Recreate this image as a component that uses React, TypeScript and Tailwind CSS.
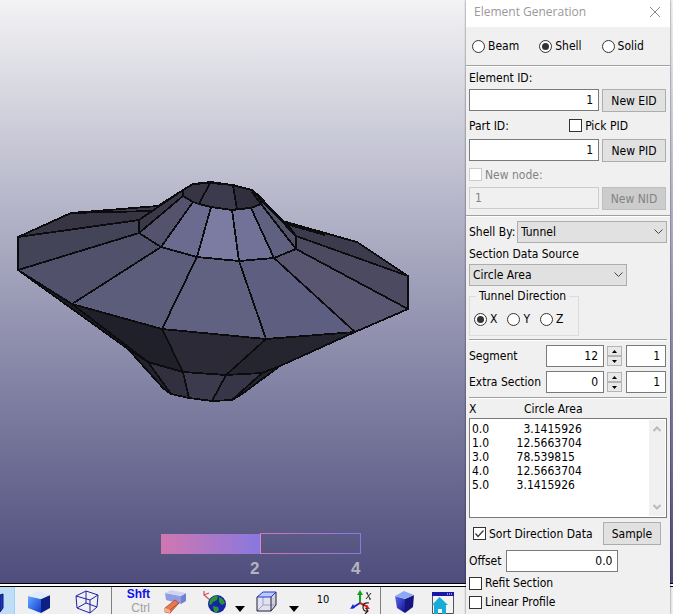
import React from "react";

const faces: [string, string][] = [
  // back of the upper wing
  ["71,213 158,206 183,190 139,220", "#3a3847"],
  ["286,222 357,242 408,276 296,236", "#3c3b4d"],
  // left wing
  ["18,237 71,213 152,211 139,220", "#373544"],
  ["18,237 139,220 139,233 18,270", "#444459"],
  ["18,270 139,233 161,247 72,304", "#52516b"],
  ["72,304 161,247 197,257 162,329", "#5c5d7a"],
  ["162,329 197,257 239,261 266,339", "#616182"],
  ["266,339 239,261 274,258 355,332", "#5e5f80"],
  ["355,332 274,258 296,249 408,309", "#585670"],
  ["408,309 296,249 296,236 408,276", "#4b4a60"],
  // cone
  ["139,220 183,190 183,196 139,233", "#3b3948"],
  ["139,233 183,196 193,202 161,247", "#54526c"],
  ["161,247 193,202 211,207 197,257", "#6b6b90"],
  ["197,257 211,207 232,210 239,261", "#7c7ba1"],
  ["239,261 232,210 251,208 274,258", "#727299"],
  ["274,258 251,208 261,204 296,249", "#606080"],
  ["296,249 261,204 261,199 296,236", "#52516b"],
  ["252,190 258,195 284,222 296,236 261,200", "#42415a"],
  // inside of the top opening
  ["183,196 183,190 193,184 210,183 199,204 193,202", "#373544"],
  ["199,204 210,183 233,185 237,209 232,210 211,207", "#3b3b4d"],
  ["237,209 233,185 252,190 261,200 261,204 251,208", "#312f3d"],
  // lower side
  ["18,270 72,304 148,362 128,349", "#1c1c24"],
  ["72,304 162,329 183,372 148,362", "#20202a"],
  ["162,329 266,339 226,375 183,372", "#2b2a36"],
  ["266,339 355,332 280,366 262,373 226,375", "#252530"],
  ["128,349 148,362 171,394 163,388", "#23232e"],
  ["148,362 183,372 189,398 171,394", "#32303f"],
  ["183,372 226,375 212,401 189,398", "#3b3b4d"],
  ["226,375 262,373 232,400 212,401", "#373548"],
  ["262,373 280,366 242,394 232,400", "#23232e"],
];

const edges: string[] = [
  "71,213 158,206 183,190",
  "71,213 152,211",
  "284,222 357,242 408,276",
  "286,224 325,235",
  "183,190 193,184 211,182 232,185 252,190 261,200",
  "252,192 261,204",
  "128,349 163,388 171,394",
  "262,373 280,366 242,394",
  "18,270 128,349 148,362",
];

function Mesh() {
  return (
    <g shapeRendering="crispEdges" stroke="#0c0c0e" strokeWidth="1.8" strokeLinejoin="round">
      {faces.map(([points, fill]) => (
        <polygon key={points} points={points} fill={fill} />
      ))}
      {edges.map((points) => (
        <polyline key={points} points={points} fill="none" />
      ))}
    </g>
  );
}

function Viewport() {
  return (
    <main className="min-h-0 flex-1 bg-linear-to-b from-[#f3f3f4] to-[#4f4d7c]">
      <svg viewBox="0 0 673 583" preserveAspectRatio="xMinYMin meet" className="block h-full w-full" role="img" aria-label="Shell mesh">
        <defs>
          <linearGradient id="bar" gradientUnits="objectBoundingBox">
            <stop offset="0" stopColor="#d077b0" />
            <stop offset="1" stopColor="#8878e0" />
          </linearGradient>
        </defs>
        <Mesh />
        <rect x="161" y="534" width="100" height="20" fill="url(#bar)" />
        <rect x="260.500" y="533.500" width="100" height="20" fill="none" stroke="url(#bar)" />
        <path d="M260.500 534v20" stroke="#e87fc4" />
        <g fill="#b4b4be" fontFamily="Liberation Sans, sans-serif" fontSize="17" fontWeight="bold">
          <text x="250" y="574">2</text>
          <text x="351" y="574">4</text>
        </g>
      </svg>
    </main>
  );
}

function SolidCube({ dark = false }: { dark?: boolean }) {
  const id = dark ? "cubeDark" : "cubeLight";
  return (
    <svg width="24" height="24" viewBox="0 0 24 24" className="shrink-0">
      <defs>
        <linearGradient id={id} x1="0" y1="0" x2="1" y2="1">
          <stop offset="0" stopColor={dark ? "#5a6cf0" : "#6aa8ff"} />
          <stop offset="1" stopColor={dark ? "#10108a" : "#0a3cd0"} />
        </linearGradient>
      </defs>
      {dark ? (
        <>
          <path d="M2 6 12 9v14L4 18z" fill={`url(#${id})`} />
          <path d="M12 9 21 5 20 17 12 23z" fill="#15157e" />
          <path d="M2 6 11 1 21 5 12 9z" fill="#8fa8f4" />
        </>
      ) : (
        <>
          <path d="M1 6 14 9v14L1 18z" fill={`url(#${id})`} />
          <path d="M14 9 23 5v13l-9 5z" fill="#0e2084" />
          <path d="M1 6 11 1l12 4-9 4z" fill="#dfeafa" />
        </>
      )}
    </svg>
  );
}

function WireCube() {
  return (
    <svg width="26" height="24" viewBox="0 0 26 24" fill="none" stroke="#2020a8" className="shrink-0">
      <path d="M2 6 12 1l12 4-8 5zM2 6l1 12 13 5V10M24 5l-1 12-7 6M12 1v12L3 18M12 13l11 4" />
    </svg>
  );
}

function EraserIcon() {
  return (
    <svg width="24" height="24" viewBox="0 0 24 24" className="shrink-0">
      <path d="M1 3 17 6v8L2 10z" fill="#929ce0" />
      <path d="M17 6l5-3v8l-5 3z" fill="#7480cc" />
      <path d="M1 3 7 0l15 3-5 3z" fill="#d0d4f4" />
      <path d="M1 18 11 10l4 3-9 10-5-1z" fill="#e87850" stroke="#a84830" strokeWidth=".8" />
      <path d="M1 18l5 2v3l-5-1z" fill="#f8b090" />
      <path d="M6 20l9-7" stroke="#a84830" strokeWidth=".8" />
    </svg>
  );
}

function GlobeIcon() {
  return (
    <svg width="26" height="24" viewBox="0 0 26 24" className="shrink-0">
      <path d="M2 1v4l6 5M2 5l5-2" fill="none" stroke="#d05050" strokeWidth="1.200" />
      <circle cx="15" cy="14" r="9" fill="#1824a8" />
      <path d="M8 10q4-5 8-4l-1 4-4 2-2 3-2-1zM17 7q4 1 6 6l-3 2-3-3zM11 16l5 1 1 3-3 3q-3-2-3-7z" fill="#28962e" />
    </svg>
  );
}

function BoxIcon() {
  return (
    <svg width="22" height="24" viewBox="0 0 22 24" className="shrink-0">
      <path d="M1 7h14v14H1z" fill="#e0e2f4" />
      <path d="M15 7l5-5v13l-5 6z" fill="#d0d0dc" />
      <path d="M1 7 7 2h13l-5 5z" fill="#bccbff" />
      <path d="M7 7v8l-6 6M7 15h13" fill="none" stroke="#a0a0b8" />
      <path d="M1 7v14h14l5-6V2M15 7v14" fill="none" stroke="#202038" />
      <path d="M1 7h14l5-5H7z" fill="none" stroke="#2838c8" />
    </svg>
  );
}

function AxisIcon() {
  return (
    <svg width="24" height="26" viewBox="0 0 24 26" className="shrink-0" fill="none">
      <path d="M11 13V3" stroke="#10a020" strokeWidth="2" />
      <path d="M8 5l3-5 3 5z" fill="#10a020" />
      <path d="M11 13l-8 5" stroke="#1828d8" strokeWidth="2" />
      <path d="M1 19l3-5 2 4z" fill="#1828d8" />
      <path d="M11 13l8 4" stroke="#e02020" strokeWidth="2" />
      <path d="M21 19l-5 0 2-4z" fill="#e02020" />
      <path d="M17 9l5-6M18 3l3 6M17 3h2M20 9h2" stroke="#202020" />
      <path d="M20 13q-6-1-6 4t5 4M17 18l2 3-3 3" stroke="#202020" strokeWidth="1.200" />
    </svg>
  );
}

function HomeIcon() {
  return (
    <svg width="24" height="24" viewBox="0 0 24 24" className="shrink-0">
      <path d="M1.500 2.500h21v21h-21z" fill="#f4f4f0" stroke="#505068" />
      <path d="M1 2h22v4H1z" fill="#1818a8" />
      <path d="M16 4h1M18 4h1M20 4h1" stroke="#fff" />
      <path d="M1 15 8.500 7 17 15h-2v9h-4v-5H7v5H3v-9z" fill="#18acd8" />
    </svg>
  );
}

function ToolButton({ label, className, children }: { label: string; className: string; children: React.ReactNode }) {
  return (
    <button aria-label={label} className={`flex shrink-0 justify-center ${className}`}>
      {children}
    </button>
  );
}

function MenuArrow({ label }: { label: string }) {
  return (
    <button aria-label={label} className="flex w-5 shrink-0 justify-center pt-[19px]">
      <svg width="10" height="6" viewBox="0 0 10 6">
        <path d="M0 0h10L5 6z" fill="#000" />
      </svg>
    </button>
  );
}

function Toolbar() {
  return (
    <footer className="shrink-0 border-t border-black bg-white pt-[2px]">
      <div className="flex h-[28px] items-start overflow-hidden border-t border-black bg-[#f0f0f0]">
        <button aria-label="Shaded view" className="h-full w-[15px] shrink-0 overflow-hidden border-r border-[#99d1ff] bg-[#bfddf5] pt-[5px]">
          <svg width="4" height="20" viewBox="0 0 4 20">
            <path d="M0 2 3 1v14l-3 4z" fill="#1838c8" stroke="#101868" />
          </svg>
        </button>
        <ToolButton label="Solid view" className="w-12 pt-[3px]"><SolidCube /></ToolButton>
        <ToolButton label="Wireframe view" className="w-12 pt-[3px]"><WireCube /></ToolButton>
        <div className="h-full w-px shrink-0 bg-[#808080]" />
        <div className="flex w-[38px] shrink-0 flex-col items-end text-[12px] leading-[14px] font-['Liberation_Sans',sans-serif]">
          <button className="font-bold text-[#1010f0]">Shft</button>
          <button className="text-[#a0a0a0]">Ctrl</button>
        </div>
        <ToolButton label="Erase" className="w-[52px] pt-[3px]"><EraserIcon /></ToolButton>
        <ToolButton label="Globe" className="w-[25px] pt-[3px]"><GlobeIcon /></ToolButton>
        <div className="w-[3px] shrink-0" />
        <MenuArrow label="Globe options" />
        <ToolButton label="Box view" className="w-[34px] pt-[3px]"><BoxIcon /></ToolButton>
        <MenuArrow label="Box options" />
        <div className="flex w-[38px] shrink-0 justify-center pt-[5px] text-[11px] leading-[16px]">10</div>
        <ToolButton label="Rotate about X" className="w-[38px] pt-[3px]"><AxisIcon /></ToolButton>
        <div className="h-full w-px shrink-0 bg-[#808080]" />
        <ToolButton label="Block" className="w-[48px] pt-[3px]"><SolidCube dark /></ToolButton>
        <ToolButton label="Home" className="w-[28px] pt-[3px]"><HomeIcon /></ToolButton>
      </div>
    </footer>
  );
}

function Radio({ name, label, checked }: { name: string; label: string; checked?: boolean }) {
  return (
    <label className="flex items-center gap-[3px]">
      <input
        type="radio"
        name={name}
        defaultChecked={checked}
        className="grid size-[13px] shrink-0 appearance-none place-items-center rounded-full border border-[#333] bg-white before:size-[7px] before:rounded-full checked:before:bg-[#333]"
      />
      {label}
    </label>
  );
}

function Check({ label, checked, disabled }: { label: string; checked?: boolean; disabled?: boolean }) {
  return (
    <label className={`flex items-center gap-[3px] ${disabled ? "text-[#838383]" : ""}`}>
      <span className="grid size-[13px] shrink-0">
        <input
          type="checkbox"
          defaultChecked={checked}
          disabled={disabled}
          className="peer col-start-1 row-start-1 size-[13px] appearance-none border border-[#333] bg-white disabled:border-[#ccc]"
        />
        <svg viewBox="0 0 13 13" className="pointer-events-none invisible col-start-1 row-start-1 size-[13px] peer-checked:visible">
          <path d="M2.500 6.500 5 9.500 10.500 3.500" fill="none" stroke="#333" strokeWidth="1.200" />
        </svg>
      </span>
      {label}
    </label>
  );
}

function Field({ label, value, className = "", disabled }: { label: string; value: string; className?: string; disabled?: boolean }) {
  return (
    <input
      aria-label={label}
      defaultValue={value}
      disabled={disabled}
      className={`h-[22px] min-w-0 border border-[#7a7a7a] bg-white px-[5px] text-right disabled:border-[#ccc] disabled:bg-[#f0f0f0] disabled:text-left disabled:text-[#838383] ${className}`}
    />
  );
}

function PushButton({ children, className = "", disabled }: { children: string; className?: string; disabled?: boolean }) {
  return (
    <button
      disabled={disabled}
      className={`h-[23px] shrink-0 border border-[#adadad] bg-[#e1e1e1] disabled:border-[#bfbfbf] disabled:bg-[#ccc] disabled:text-[#838383] ${className}`}
    >
      {children}
    </button>
  );
}

function Select({ label, value, className }: { label: string; value: string; className: string }) {
  return (
    <span className={`grid ${className}`}>
      <select aria-label={label} className="col-start-1 row-start-1 h-[22px] appearance-none border border-[#adadad] bg-[#e1e1e1] px-[3px]">
        <option>{value}</option>
      </select>
      <svg width="9" height="6" viewBox="0 0 9 6" className="pointer-events-none col-start-1 row-start-1 mr-[4px] self-center justify-self-end">
        <path d="M.5.5l4 4 4-4" fill="none" stroke="#444" />
      </svg>
    </span>
  );
}

function Separator() {
  return <hr className="h-[2px] border-0 border-t border-b border-t-[#a0a0a0] border-b-white" />;
}

function Spinner({ label }: { label: string }) {
  const button = "grid h-[10px] place-items-center border border-[#b4b4b4] bg-[#e8e8e8]";
  return (
    <span className="flex w-[15px] shrink-0 flex-col">
      <button aria-label={`Increase ${label}`} className={button}>
        <svg width="5" height="3" viewBox="0 0 5 3"><path d="M0 3 2.500 0 5 3z" /></svg>
      </button>
      <button aria-label={`Decrease ${label}`} className={button}>
        <svg width="5" height="3" viewBox="0 0 5 3"><path d="M0 0 2.500 3 5 0z" /></svg>
      </button>
    </span>
  );
}

function CountRow({ label, value }: { label: string; value: string }) {
  return (
    <div className="flex items-center">
      <span className="flex-1 whitespace-nowrap">{label}</span>
      <Field label={label} value={value} className="w-[58px]" />
      <span className="flex pr-[4px] pl-[3px]"><Spinner label={label} /></span>
      <Field label={`${label} step`} value="1" className="w-[40px]" />
    </div>
  );
}

const sectionData = [
  "0.0          3.1415926",
  "1.0        12.5663704",
  "3.0        78.539815",
  "4.0        12.5663704",
  "5.0        3.1415926",
].join("\n");

function ElementDialog() {
  return (
    <section
      aria-label="Element Generation"
      className="absolute top-0 right-[3px] h-full w-[204px] overflow-hidden bg-[#f0f0f0] shadow-[0_0_2px_rgba(0,0,0,0.6)]"
    >
      <header className="flex h-[27px] items-center justify-between bg-white pr-[9px] pb-[3px] pl-[8px] text-[#999]">
        <h1 className="font-['Open_Sans',sans-serif] text-[12px]">Element Generation</h1>
        <button aria-label="Close">
          <svg width="12" height="12" viewBox="0 0 12 12" stroke="#888"><path d="M1 1l10 10M11 1 1 11" /></svg>
        </button>
      </header>

      <div className="flex h-[38px] items-center gap-[20px] pl-[6px]">
        <Radio name="type" label="Beam" />
        <Radio name="type" label="Shell" checked />
        <Radio name="type" label="Solid" />
      </div>
      <Separator />

      <div className="flex flex-col pr-[4px] pl-[3px]">
        <div className="flex h-[22px] items-center">Element ID:</div>
        <div className="flex gap-[3px]">
          <Field label="Element ID" value="1" className="flex-1" />
          <PushButton className="w-[64px]">New EID</PushButton>
        </div>
        <div className="flex h-[27px] items-center justify-between pr-[38px]">
          <span>Part ID:</span>
          <Check label="Pick PID" />
        </div>
        <div className="flex gap-[3px]">
          <Field label="Part ID" value="1" className="flex-1" />
          <PushButton className="w-[64px]">New PID</PushButton>
        </div>
        <div className="flex h-[25px] items-center">
          <Check label="New node:" disabled />
        </div>
        <div className="flex gap-[3px]">
          <Field label="New node" value="1" disabled className="flex-1" />
          <PushButton className="w-[64px]" disabled>New NID</PushButton>
        </div>
      </div>

      <div className="pt-[5px] pb-[4px]"><Separator /></div>

      <div className="flex flex-col px-[3px]">
        <div className="flex items-center justify-between whitespace-nowrap">
          <span>Shell By:</span>
          <Select label="Shell By" value="Tunnel" className="w-[150px]" />
        </div>
        <div className="flex h-[21px] items-center">Section Data Source</div>
        <Select label="Section Data Source" value="Circle Area" className="w-[158px]" />
        <fieldset className="mt-[2px] h-[48px] w-[110px] border border-[#dcdcdc] px-[4px]">
          <legend className="ml-[2px] px-[3px] leading-[16px]">Tunnel Direction</legend>
          <div className="flex h-[30px] items-center gap-[10px]">
            <Radio name="direction" label="X" checked />
            <Radio name="direction" label="Y" />
            <Radio name="direction" label="Z" />
          </div>
        </fieldset>

        <div className="pt-[3px] pb-[4px]"><Separator /></div>
        <div className="flex flex-col gap-[4px] pr-[1px]">
          <CountRow label="Segment" value="12" />
          <CountRow label="Extra Section" value="0" />
        </div>
        <div className="pt-[4px]"><Separator /></div>

        <div className="flex h-[19px] items-center">
          <span className="w-[55px]">X</span>
          <span>Circle Area</span>
        </div>
        <div className="flex h-[100px] border border-[#7a7a7a] bg-white p-px">
          <textarea
            aria-label="Section data"
            defaultValue={sectionData}
            className="h-full min-w-0 flex-1 resize-none overflow-hidden bg-white px-px pt-[2px] leading-[14px] whitespace-pre outline-none"
          />
          <div className="flex w-[16px] flex-col items-center justify-between bg-[#f0f0f0] py-[6px]">
            <button aria-label="Scroll up">
              <svg width="8" height="6" viewBox="0 0 8 6" className="block"><path d="M.5 5 4 1.500 7.500 5" fill="none" stroke="#bbb" strokeWidth="2" /></svg>
            </button>
            <button aria-label="Scroll down">
              <svg width="8" height="6" viewBox="0 0 8 6" className="block"><path d="M.5 1 4 4.500 7.500 1" fill="none" stroke="#bbb" strokeWidth="2" /></svg>
            </button>
          </div>
        </div>

        <div className="flex items-center justify-between pt-[4px] pr-[6px] pl-[4px] whitespace-nowrap">
          <Check label="Sort Direction Data" checked />
          <PushButton className="w-[58px]">Sample</PushButton>
        </div>
        <label className="flex items-center gap-[5px] pt-[5px]">
          Offset
          <Field label="Offset" value="0.0" className="w-[112px]" />
        </label>
        <div className="flex flex-col gap-[3px] pt-[3px] leading-[16px]">
          <Check label="Refit Section" />
          <Check label="Linear Profile" />
        </div>
      </div>
    </section>
  );
}

export default function App() {
  return (
    <div className="relative flex h-screen flex-col overflow-hidden font-['DejaVu_Sans_Condensed','DejaVu_Sans',sans-serif] text-[12px] leading-[16px] text-black">
      <Viewport />
      <Toolbar />
      <ElementDialog />
    </div>
  );
}
